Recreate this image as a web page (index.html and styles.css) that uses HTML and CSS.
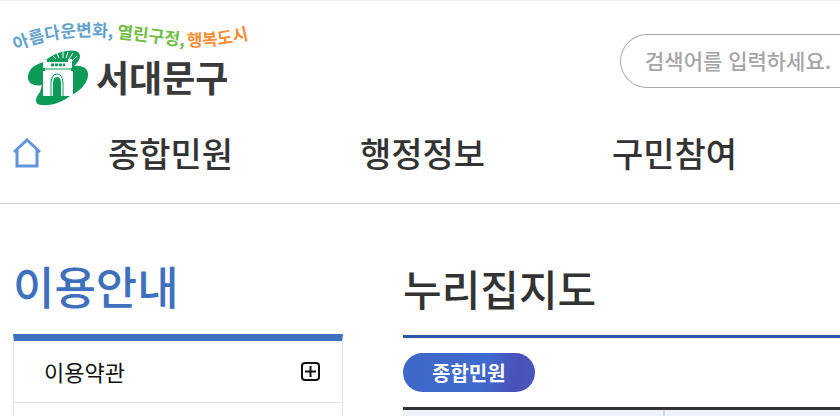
FILE: index.html
```html
<!DOCTYPE html>
<html lang="ko">
<head>
<meta charset="utf-8">
<meta name="viewport" content="width=device-width, initial-scale=1">
<title>누리집지도 - 서대문구</title>
<link rel="stylesheet" href="styles.css">
</head>
<body>
<header class="header">
  <div class="header-top">
    <a class="logo" href="#" aria-label="서대문구">
      <svg class="logo-art" viewBox="0 0 248 96" width="248" height="96">
        <defs>
          <path id="wave-a" d="M4 38Q50 17 114 26"/>
          <path id="wave-b" d="M105 25Q135 28 178 34"/>
          <path id="wave-c" d="M175 33Q206 35 250 23"/>
        </defs>
        <g class="slogan">
          <text class="slogan-blue"><textPath href="#wave-a">아름다운변화,</textPath></text>
          <text class="slogan-green"><textPath href="#wave-b">열린구정,</textPath></text>
          <text class="slogan-orange"><textPath href="#wave-c">행복도시</textPath></text>
        </g>
        <g fill="#0b9a58">
          <path d="M34 47C42 40 56 36 64 38C71 41 68 48 62 53C71 52 77 56 76 63C75 72 66 79 58 83C50 89 41 93 29 92C22 91 23 85 28 79L30 72C22 74 15 70 16 63C17 55 24 51 32 49Z"/>
        </g>
        <path d="M44 46L40 42M47 45L45 40M51 45L51 39M54 45L56 39M57 46L61 40M60 48L65 43" stroke="#fff" fill="none"/>
        <path fill="#fff" d="M31 47H35V49H56V46H60V55H59V58H61V83H51V68Q50 61 45 61Q39 61 38 68V83H31V58H33V55H31Z"/>
        <g fill="none" stroke="#0b9a58">
          <path d="M32 56H60"/>
          <path stroke-width="3" stroke-dasharray="3 1" d="M39 52H53"/>
          <path stroke="#fff" d="M32 54H60"/>
        </g>
        <path fill="#fff" d="M38 83V69Q39 60 45 60Q51 60 52 69V83Z"/>
        <path fill="none" stroke="#0b9a58" d="M39 83V69Q40 61 45 61Q50 61 51 69V83"/>
        <path fill="#0b9a58" d="M41 83V70Q41 64 45 64Q49 64 49 70V83Z"/>
        <text class="logo-name" x="84" y="79">서대문구</text>
      </svg>
    </a>
    <form class="search">
      <input class="search-input" type="text" placeholder="검색어를 입력하세요." aria-label="검색어">
    </form>
  </div>
  <nav class="nav" aria-label="주 메뉴">
    <a class="home" href="#" aria-label="홈">
      <svg viewBox="0 0 28 30" width="28" height="30" fill="none" stroke="#6494dc" stroke-width="3">
        <path d="M1 14L14 2L27 14M4 12V28H24V12"/>
      </svg>
    </a>
    <a class="nav-link" href="#">종합민원</a>
    <a class="nav-link" href="#">행정정보</a>
    <a class="nav-link" href="#">구민참여</a>
  </nav>
</header>
<div class="page">
  <aside class="side">
    <h2 class="side-title">이용안내</h2>
    <ul class="side-menu">
      <li><a class="side-link" href="#">이용약관
        <svg viewBox="0 0 20 20" width="20" height="20" fill="none" stroke="#111" stroke-width="2">
          <rect x="2" y="2" width="17" height="17" rx="3"/><path d="M10.500 5V16M5 10.500H16"/>
        </svg></a></li>
    </ul>
  </aside>
  <main class="content">
    <h1 class="content-title">누리집지도</h1>
    <a class="badge" href="#">종합민원</a>
    <div class="sitemap"><div class="cell"></div><div class="cell"></div></div>
  </main>
</div>
</body>
</html>
```

FILE: styles.css
```css
* {
  box-sizing: border-box;
}

body {
  display: flex;
  flex-direction: column;
  min-height: 100vh;
  margin: 0;
  overflow-x: hidden;
  background: #fff;
  color: #333;
  font-family: "Noto Sans CJK KR", sans-serif;
  font-weight: 500;
}

a {
  color: inherit;
  text-decoration: none;
}

.header {
  border-top: 1px solid #eee;
  border-bottom: 1px solid #ccd2d8;
}

.header-top {
  display: flex;
  justify-content: space-between;
  height: 108px;
  padding: 12px 0 0 12px;
}

.logo-art {
  display: block;
  overflow: visible;
}

.slogan {
  font-size: 17px;
  font-weight: 700;
}

.slogan-blue { fill: #64a2ce; }
.slogan-green { fill: #72bd45; }
.slogan-orange { fill: #f78f35; }

.logo-name {
  fill: #3a3a3a;
  font-size: 36px;
  font-weight: 700;
}

.search {
  flex: none;
  width: 220px;
  margin-top: 21px;
}

.search-input {
  width: 100%;
  height: 54px;
  padding: 0 0 2px 24px;
  border: 1px solid #aaa;
  border-right: 0;
  border-radius: 27px 0 0 27px;
  background: #fff;
  font: inherit;
  font-size: 21px;
  appearance: none;
}

.search-input::placeholder {
  color: #a5a5a5;
}

.nav {
  display: grid;
  grid-template-columns: 95px 252px 252px 1fr;
  align-items: center;
  height: 94px;
  padding: 0 0 6px 13px;
}

.home svg {
  display: block;
}

.nav-link {
  font-size: 34px;
  line-height: 48px;
}

.page {
  display: grid;
  flex: 1;
  grid-template-columns: 330px 1fr;
  column-gap: 60px;
  padding: 54px 0 0 13px;
}

.side,
.content {
  display: flex;
  flex-direction: column;
}

.side-title,
.content-title {
  margin: 0;
  font-weight: 500;
}

.side-title {
  height: 76px;
  color: #3f70bd;
  font-size: 45px;
  line-height: 56px;
}

.side-menu {
  flex: 1;
  margin: 0;
  padding: 0;
  border: 1px solid #e5e5e5;
  border-top: 7px solid #3f70bd;
  border-bottom: 0;
  list-style: none;
}

.side-link {
  display: flex;
  align-items: center;
  justify-content: space-between;
  height: 62px;
  padding: 0 22px 2px 30px;
  border-bottom: 1px solid #e5e5e5;
  color: #111;
  font-size: 22px;
  font-weight: 400;
  line-height: 28px;
}

.content-title {
  height: 80px;
  border-bottom: 3px solid #2856a0;
  font-size: 42px;
  line-height: 60px;
}

.badge {
  width: fit-content;
  margin: 15px 0;
  padding: 0 29px;
  border-radius: 20px;
  background: linear-gradient(100deg, #3e67c8, #406bce 60%, #4a50b8 85%, #4659b8);
  color: #fff;
  font-size: 20px;
  font-weight: 700;
  line-height: 39px;
}

.sitemap {
  display: grid;
  flex: 1;
  grid-template-columns: 262px 1fr;
  border-top: 3px solid #333238;
  background: #eef0fa;
}

.cell:first-child {
  border-right: 2px solid #d8d9e3;
}
```
